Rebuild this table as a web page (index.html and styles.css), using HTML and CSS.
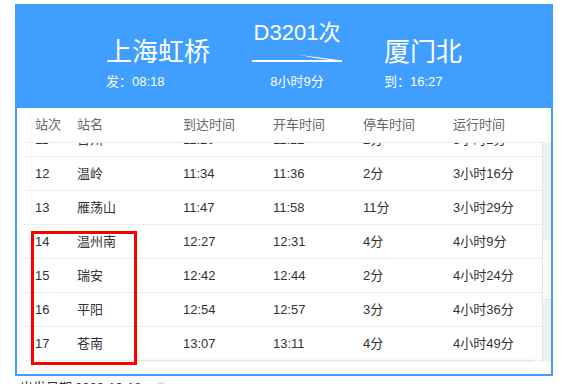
FILE: index.html
```html
<!DOCTYPE html>
<html lang="zh-CN">
<head>
<meta charset="utf-8">
<link rel="stylesheet" href="styles.css">
</head>
<body>
<div class="frame">
  <div class="hero">
    <div class="station">
      <div class="st-name">上海虹桥</div>
      <div class="st-time">发：08:18</div>
    </div>
    <div class="trip">
      <div class="train-no">D3201次</div>
      <svg class="arrow" width="90" height="8" viewBox="0 0 90 8">
        <rect x="0" y="6" width="90" height="2" fill="#fff"/>
        <polygon points="48,1 90,6.5 90,7.5 64,4.2" fill="#fff"/>
      </svg>
      <div class="duration">8小时9分</div>
    </div>
    <div class="station">
      <div class="st-name">厦门北</div>
      <div class="st-time">到：16:27</div>
    </div>
  </div>
  <div class="table">
    <div class="row head">
      <div>站次</div><div>站名</div><div>到达时间</div><div>开车时间</div><div>停车时间</div><div>运行时间</div>
    </div>
    <div class="body">
      <div class="rows">
        <div class="rows-inner">
          <div class="row"><div>11</div><div>台州</div><div>11:20</div><div>11:22</div><div>2分</div><div>3小时2分</div></div>
          <div class="row"><div>12</div><div>温岭</div><div>11:34</div><div>11:36</div><div>2分</div><div>3小时16分</div></div>
          <div class="row"><div>13</div><div>雁荡山</div><div>11:47</div><div>11:58</div><div>11分</div><div>3小时29分</div></div>
          <div class="row"><div>14</div><div>温州南</div><div>12:27</div><div>12:31</div><div>4分</div><div>4小时9分</div></div>
          <div class="row"><div>15</div><div>瑞安</div><div>12:42</div><div>12:44</div><div>2分</div><div>4小时24分</div></div>
          <div class="row"><div>16</div><div>平阳</div><div>12:54</div><div>12:57</div><div>3分</div><div>4小时36分</div></div>
          <div class="row"><div>17</div><div>苍南</div><div>13:07</div><div>13:11</div><div>4分</div><div>4小时49分</div></div>
          <div class="row"><div>18</div><div>福鼎</div><div>13:27</div><div>13:29</div><div>2分</div><div>5小时9分</div></div>
        </div>
        <div class="fade"></div>
      </div>
      <div class="scrollbar"><div class="thumb"></div></div>
    </div>
  </div>
  <div class="mark"></div>
</div>
<div class="footer">
  <span class="f-label">出发日期</span>
  <span class="f-date">2022-10-18</span>
  <span class="f-dot"></span>
</div>
</body>
</html>
```
FILE: styles.css
```css
html, body {
  margin: 0;
  background: #fff;
}
body {
  padding: 4px 0 0 15px;
  font-family: "Liberation Sans", "Noto Sans CJK SC", sans-serif;
  font-size: 13px;
  color: #333;
  overflow: hidden;
}
.frame {
  position: relative;
  box-sizing: border-box;
  width: 538px;
  height: 372px;
  border: 2px solid #409eff;
  display: flex;
  flex-direction: column;
  background: #fff;
}
.hero {
  box-sizing: border-box;
  height: 102px;
  flex: none;
  background: #409eff;
  color: #fff;
  display: flex;
  justify-content: center;
  align-items: flex-end;
  gap: 42px;
  padding-bottom: 18px;
}
.station {
  display: flex;
  flex-direction: column;
  gap: 7px;
}
.st-name {
  font-size: 26px;
  line-height: 30px;
  white-space: nowrap;
}
.st-time, .duration {
  font-size: 13px;
  line-height: 16px;
  white-space: nowrap;
}
.trip {
  width: 90px;
  display: flex;
  flex-direction: column;
  align-items: center;
}
.train-no {
  font-size: 22px;
  line-height: 26px;
  white-space: nowrap;
}
.arrow {
  display: block;
  margin-top: 8px;
}
.duration {
  margin-top: 12px;
}
.table {
  flex: 1;
  display: flex;
  flex-direction: column;
  padding-left: 8px;
}
.row {
  display: grid;
  grid-template-columns: 42px 106px 90px 90px 90px 99px;
  box-sizing: border-box;
  height: 34px;
  border-bottom: 1px solid #ebeef5;
  align-items: center;
}
.row > div {
  padding-left: 10px;
  white-space: nowrap;
  line-height: 16px;
}
.head {
  height: 35px;
  width: 526px;
  color: #666;
}
.body {
  display: flex;
  height: 219px;
}
.rows {
  position: relative;
  width: 517px;
  overflow: hidden;
}
.rows-inner {
  margin-top: -20px;
}
.fade {
  position: absolute;
  left: 112px;
  right: 8px;
  bottom: -4px;
  height: 9px;
  background: linear-gradient(to bottom, rgba(0,0,0,0), rgba(0,0,0,0.09));
}
.scrollbar {
  box-sizing: border-box;
  width: 9px;
  background: #f1f1f1;
  border-left: 1px solid #e4e4e4;
  padding-top: 97px;
}
.thumb {
  height: 59px;
  background: #fbfbfb;
  border-bottom: 1px solid #e4e4e4;
}
.mark {
  position: absolute;
  left: 14px;
  top: 225px;
  width: 106px;
  height: 134px;
  box-sizing: border-box;
  border: 3px solid #f00;
}
.footer {
  margin-top: 4px;
  margin-left: 5px;
  display: flex;
  align-items: center;
  gap: 3px;
  line-height: 16px;
  color: #333;
}
.f-dot {
  width: 12px;
  height: 12px;
  border-radius: 50%;
  background: #ddd;
  margin-left: 10px;
}
```
